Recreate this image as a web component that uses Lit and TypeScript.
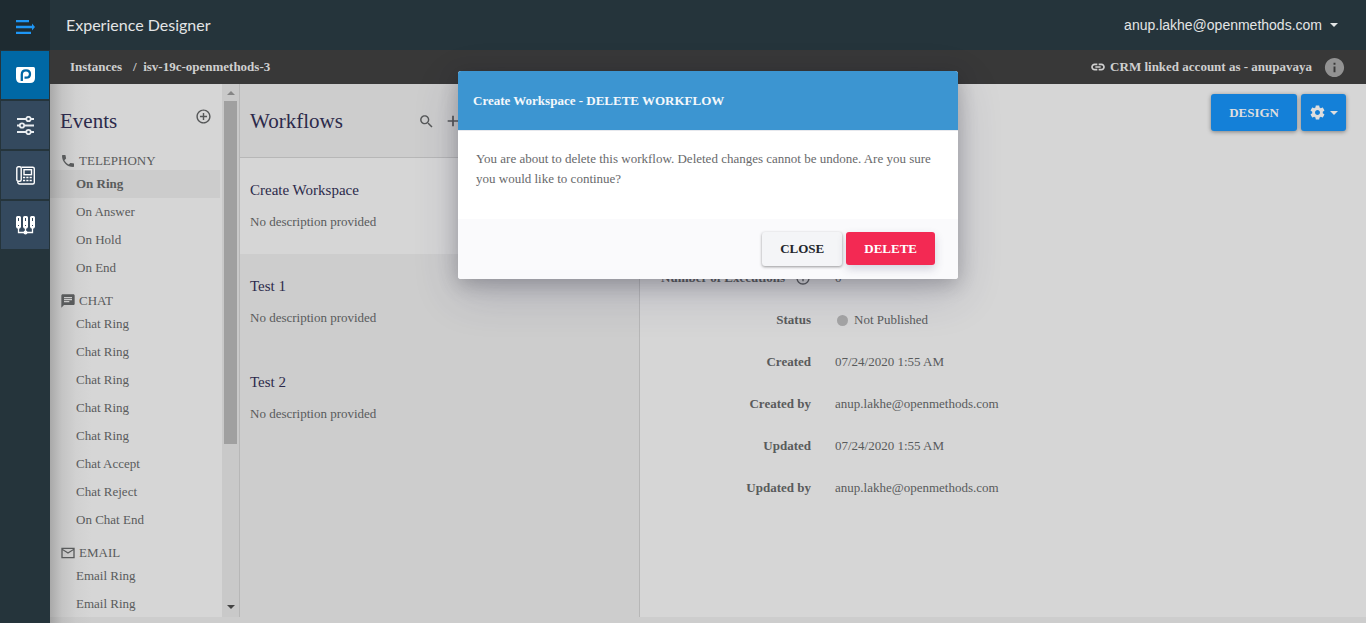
import { LitElement, html, css, svg } from "lit";
import { customElement } from "lit/decorators.js";

const ICONS = {
  phone: "M6.62 10.79c1.44 2.83 3.76 5.14 6.59 6.59l2.2-2.2c.27-.27.67-.36 1.02-.24 1.12.37 2.33.57 3.57.57.55 0 1 .45 1 1V20c0 .55-.45 1-1 1-9.39 0-17-7.61-17-17 0-.55.45-1 1-1h3.5c.55 0 1 .45 1 1 0 1.25.2 2.45.57 3.57.11.35.03.74-.25 1.02l-2.2 2.2z",
  chat: "M20 2H4c-1.1 0-1.99.9-1.99 2L2 22l4-4h14c1.1 0 2-.9 2-2V4c0-1.1-.9-2-2-2zM6 9h12v2H6V9zm8 5H6v-2h8v2zm4-6H6V6h12v2z",
  email: "M22 4H2v16h20V4zm-2 14H4V8l8 5 8-5v10zm-8-7L4 6h16l-8 5z",
  addCircle: "M13 7h-2v4H7v2h4v4h2v-4h4v-2h-4V7zm-1-5C6.48 2 2 6.48 2 12s4.48 10 10 10 10-4.48 10-10S17.52 2 12 2zm0 18c-4.41 0-8-3.59-8-8s3.59-8 8-8 8 3.59 8 8-3.59 8-8 8z",
  search: "M15.5 14h-.79l-.28-.27C15.41 12.59 16 11.11 16 9.5 16 5.91 13.09 3 9.5 3S3 5.91 3 9.5 5.91 16 9.5 16c1.61 0 3.09-.59 4.23-1.57l.27.28v.79l5 4.99L20.49 19l-4.99-5zm-6 0C7.01 14 5 11.99 5 9.5S7.01 5 9.5 5 14 7.01 14 9.5 11.99 14 9.5 14z",
  add: "M20 13.300h-6.700V20h-2.600v-6.700H4v-2.600h6.700V4h2.600v6.700H20z",
  link: "M4.300 12c0-1.500 1.200-2.700 2.700-2.700h4V6.700H7C4.100 6.700 1.700 9.100 1.700 12s2.400 5.300 5.300 5.300h4v-2.600H7c-1.500 0-2.700-1.200-2.700-2.700zM8 13.200h8v-2.400H8zM17 6.700h-4v2.600h4c1.500 0 2.700 1.200 2.700 2.700s-1.200 2.700-2.700 2.700h-4v2.600h4c2.900 0 5.300-2.400 5.300-5.300S19.900 6.700 17 6.700z",
  info: "M12 2C6.480 2 2 6.480 2 12s4.480 10 10 10 10-4.480 10-10S17.520 2 12 2zm1 15h-2v-6h2v6zm0-8h-2V7h2v2z",
  infoOutline: "M11 7h2v2h-2zm0 4h2v6h-2zm1-9C6.480 2 2 6.480 2 12s4.480 10 10 10 10-4.480 10-10S17.520 2 12 2zm0 18c-4.410 0-8-3.590-8-8s3.590-8 8-8 8 3.590 8 8-3.590 8-8 8z",
  gear: "M19.430 12.980c.04-.32.07-.64.07-.98s-.03-.66-.07-.98l2.110-1.650c.19-.15.24-.42.12-.64l-2-3.460c-.12-.22-.39-.3-.61-.22l-2.490 1c-.52-.4-1.080-.73-1.690-.98l-.38-2.650C14.460 2.180 14.250 2 14 2h-4c-.25 0-.46.18-.49.42l-.38 2.650c-.61.25-1.170.59-1.690.98l-2.490-1c-.23-.09-.49 0-.61.22l-2 3.460c-.13.22-.07.49.12.64l2.110 1.650c-.04.32-.07.65-.07.98s.03.66.07.98l-2.110 1.650c-.19.15-.24.42-.12.64l2 3.460c.12.22.39.3.61.22l2.490-1c.52.4 1.080.73 1.690.98l.38 2.650c.03.24.24.42.49.42h4c.25 0 .46-.18.49-.42l.38-2.650c.61-.25 1.170-.59 1.690-.98l2.490 1c.23.09.49 0 .61-.22l2-3.460c.12-.22.07-.49-.12-.64l-2.110-1.650zM12 15.500c-1.930 0-3.500-1.570-3.500-3.500s1.570-3.500 3.500-3.500 3.500 1.570 3.500 3.500-1.570 3.500-3.500 3.500z",
};

const glyph = (d: string, size: number) => html`
  <svg class="glyph" width=${size} height=${size} viewBox="0 0 24 24" aria-hidden="true"><path d=${d} /></svg>
`;

const caret = html`<svg class="glyph" width="8" height="4" viewBox="0 0 8 4" aria-hidden="true"><path d="M0 0h8L4 4z" /></svg>`;

const RAIL = [
  {
    label: "PopFlow",
    active: true,
    art: svg`<path d="M1.500 1h16Q19 1 19 2.500V12q0 5-5 5H5q-5 0-5-5V2.500Q0 1 1.500 1z" fill="#fff"/>
      <path d="M5.800 15V8.200M5.800 8.500C5.800 5.800 7.500 4.300 10 4.300s4 1.600 4 3.700-1.600 3.700-4 3.700H8.500" fill="none" stroke="#0068a5" stroke-width="2.300"/>`,
  },
  {
    label: "Settings",
    active: false,
    art: svg`<g fill="none" stroke="#e9edf1" stroke-width="1.800">
      <path d="M1 3h9M15 3h3M1 9.500h3M9 9.500h9M1 16h9M15 16h3"/>
      <circle cx="12.500" cy="3" r="2.200"/><circle cx="6" cy="9.500" r="2.200"/><circle cx="12.500" cy="16" r="2.200"/></g>`,
  },
  {
    label: "Phone devices",
    active: false,
    art: svg`<g fill="none" stroke="#fff" stroke-width="1.400">
      <path d="M5.500 1.200h11.300a1.500 1.500 0 0 1 1.500 1.500v13.800a1.500 1.500 0 0 1-1.500 1.500H3.800a2 2 0 0 1-2-2.500"/>
      <rect x=".8" y=".8" width="4.400" height="14.500" rx="1.500"/><rect x="8" y="3.700" width="7.500" height="5"/></g>
      <path d="M7 10.700h2.200v1.600H7zm3.300 0h2.200v1.600h-2.200zm3.300 0h2.200v1.600h-2.200zM7 13.700h2.200v1.600H7zm3.300 0h2.200v1.600h-2.200zm3.300 0h2.200v1.600h-2.200z" fill="#fff"/>`,
  },
  {
    label: "Connectors",
    active: false,
    art: svg`<g fill="#fff"><path d="M0 1.500Q0 0 1.500 0h2Q5 0 5 1.500V11l-1 1.500H1L0 11zM7 1.500Q7 0 8.500 0h2Q12 0 12 1.500V11l-1 1.500H8L7 11zM14 1.500Q14 0 15.500 0h2Q19 0 19 1.500V11l-1 1.500h-3L14 11z"/><circle cx="9.500" cy="16.500" r="2"/></g>
      <path d="M2.500 12v4.500h14V12M9.500 12v5" fill="none" stroke="#fff" stroke-width="1.300"/>
      <path d="M2.500 2v3M9.500 2v3M16.500 2v3M2 9.500h1M9 9.500h1M16 9.500h1" stroke="#34495e" stroke-width="1"/>`,
  },
];

const EVENTS = [
  { name: "TELEPHONY", icon: ICONS.phone, items: ["On Ring", "On Answer", "On Hold", "On End"] },
  {
    name: "CHAT",
    icon: ICONS.chat,
    items: ["Chat Ring", "Chat Ring", "Chat Ring", "Chat Ring", "Chat Ring", "Chat Accept", "Chat Reject", "On Chat End"],
  },
  { name: "EMAIL", icon: ICONS.email, items: ["Email Ring", "Email Ring"] },
];

const WORKFLOWS = ["Create Workspace", "Test 1", "Test 2"];

const DETAILS = [
  { label: "Number of Executions", value: "0", info: true },
  { label: "Status", value: "Not Published", dot: true },
  { label: "Created", value: "07/24/2020 1:55 AM" },
  { label: "Created by", value: "anup.lakhe@openmethods.com" },
  { label: "Updated", value: "07/24/2020 1:55 AM" },
  { label: "Updated by", value: "anup.lakhe@openmethods.com" },
];

@customElement("app-root")
export class AppRoot extends LitElement {
  static styles = css`
    :host {
      display: block;
      height: 100vh;
      overflow: hidden;
      font: 13px/20px "Liberation Serif", serif;
      color: #595b5c;
      background: #cdcdcd;
    }
    *, *::before { box-sizing: border-box; }
    h1, h2, h3, p, ul, dl, dd { margin: 0; padding: 0; font-weight: 400; }
    ul { list-style: none; }
    a { color: inherit; text-decoration: none; }
    button { font: inherit; color: inherit; border: 0; padding: 0; background: none; cursor: pointer; }
    .glyph { display: block; fill: currentColor; flex: none; }

    .shell { display: grid; grid-template-columns: 50px minmax(0, 1fr); grid-template-rows: minmax(0, 1fr); height: 100%; }
    .rail { background: #25343b; }
    .toggle { display: flex; align-items: center; justify-content: center; width: 100%; height: 50px; padding-top: 4px; background: #1e2b31; }
    .railList { display: grid; gap: 2px; padding: 1px 1px 0 1px; }
    .railLink { display: flex; align-items: center; justify-content: center; height: 48px; background: #34495e; }
    .railLink.active { background: #0068a5; }

    .page { display: grid; grid-template-rows: 50px 34px minmax(0, 1fr); position: relative; min-height: 0; }
    .top { display: flex; align-items: center; justify-content: space-between; padding: 0 28px 0 16px; background: #25343b; color: #e3e5e6; }
    .title { font: 16px/24px Lato, sans-serif; }
    .account { display: flex; align-items: center; gap: 8px; font: 14px/20px "Liberation Sans", sans-serif; }
    .crumbs { display: flex; align-items: center; justify-content: space-between; padding: 0 20px; background: #383838; color: #cfcfcf; font-weight: 700; }
    .trail, .crm { display: flex; align-items: center; }
    .trail { gap: 11px; }
    .crm { gap: 4px; }
    .crmInfo { margin-left: 7px; color: #929292; }

    .columns { display: grid; grid-template-columns: 190px 400px minmax(0, 1fr); grid-template-rows: minmax(0, 1fr); padding-bottom: 6px; min-height: 0; background: linear-gradient(90deg, #a3a3a3, #bebebe 12px, #c9c9c9 26px, #cdcdcd 42px); }
    .events { display: grid; grid-template-columns: minmax(0, 1fr) 17px; grid-template-rows: minmax(0, 1fr); min-height: 0; background: linear-gradient(90deg, #a9a9a9, #c4c4c4 12px, #d1d1d1 26px, #d6d6d6 42px); border-right: 1px solid #b7b7b7; }
    .eventBody { min-height: 0; overflow: hidden; padding-top: 22px; }
    .head { display: flex; justify-content: space-between; color: #2c2a4b; }
    .heading { font-size: 21px; line-height: 30px; }
    .eventHead { padding: 0 10px; margin-bottom: 16px; }
    .icon { display: block; height: 20px; color: #555758; }
    .group { margin-bottom: 10px; }
    .groupName { display: flex; align-items: center; gap: 3px; height: 18px; padding-left: 10px; font-size: 13px; line-height: 18px; }
    .event { display: block; height: 28px; padding-left: 26px; margin-right: 2px; line-height: 28px; }
    .event.on { font-weight: 700; background: rgba(0, 0, 0, .045); }
    .scroll { display: flex; flex-direction: column; align-items: center; justify-content: space-between; padding: 7px 2px 8px; background: #c9c9c9; color: #444; }
    .thumb { width: 13px; height: 343px; background: #a0a0a0; margin: 6px 0 auto; }
    .up { color: #858585; }

    .flows { border-right: 1px solid #b7b7b7; background: #cdcdcd; }
    .flowHead { height: 74px; padding: 22px 10px 0; border-bottom: 1px solid #b7b7b7; }
    .tools { display: flex; gap: 10px; padding: 5px 168px 0 0; }
    .flow { display: block; height: 96px; padding: 22px 10px; }
    .flow.on { background: #d6d6d6; }
    .flowName { font-size: 15px; line-height: 20px; color: #2c2a4b; margin-bottom: 12px; }

    .detail { background: #d6d6d6; padding: 10px 20px 0 0; }
    .actions { display: flex; justify-content: flex-end; gap: 4px; color: #dedede; margin-bottom: 42px; }
    .action { display: flex; align-items: center; justify-content: center; gap: 4px; height: 37px; padding: 0 18px; border-radius: 3px; background: #1480d8; box-shadow: 0 1px 4px rgba(0, 0, 0, .4); font-weight: 700; }
    .menu { padding: 0 8px; }
    .facts { display: grid; grid-template-columns: 171px minmax(0, 1fr); column-gap: 24px; padding-top: 84px; }
    .label, .value { display: flex; align-items: center; height: 42px; }
    .label { justify-content: flex-end; gap: 10px; font-weight: 700; white-space: nowrap; }
    .dot { width: 11px; height: 11px; margin: 0 6px 0 2px; border-radius: 50%; background: #a5a5a5; }

    .overlay { position: absolute; inset: 0; display: flex; align-items: flex-start; justify-content: center; padding-top: 71px; }
    .modal { position: static; display: block; width: 500px; margin: 0; padding: 0; border: 0; border-radius: 3px; overflow: hidden; background: #fff; color: #68696b; box-shadow: 0 15px 45px rgba(50, 50, 93, .2), 0 5px 20px rgba(0, 0, 0, .22); }
    .modalHead { padding: 20px 15px 19px; line-height: 20px; font-size: 13px; font-weight: 700; color: #f4f8fb; background: #3c95d1; border-bottom: 1px solid #e6e8ed; box-sizing: content-box; }
    .modalText { padding: 18px 18px 30px; }
    .modalFoot { display: flex; justify-content: flex-end; align-items: flex-start; gap: 4px; padding: 13px 23px; background: #fafafc; }
    .close, .delete { padding: 0 18px; border-radius: 3px; font-weight: 700; }
    .close { height: 34px; color: #23262b; background: #f4f5f7; box-shadow: 0 1px 3px rgba(0, 0, 0, .4); }
    .delete { height: 33px; color: #fff; background: #f32953; box-shadow: 0 4px 10px rgba(50, 50, 93, .2); }
  `;

  render() {
    return html`
      <div class="shell">
        <nav class="rail">
          <button class="toggle" aria-label="Expand menu">
            <svg width="19" height="14" viewBox="0 0 19 14" aria-hidden="true">
              <path d="M0 0h13v2.300H0zM0 5.800h16V3.500l3 3.500-3 3.500V8.200H0zM0 11.700h15V14H0z" fill="#1e96f5" />
            </svg>
          </button>
          <div class="railList">
            ${RAIL.map((r) => html`
              <a class="railLink ${r.active ? "active" : ""}" href="#" aria-label=${r.label}>
                <svg width="19" height="19" viewBox="0 0 19 19" aria-hidden="true">${r.art}</svg>
              </a>`)}
          </div>
        </nav>
        <div class="page">
          <header class="top">
            <h1 class="title">Experience Designer</h1>
            <button class="account">anup.lakhe@openmethods.com ${caret}</button>
          </header>
          <div class="crumbs">
            <div class="trail"><a href="#">Instances</a><span>/&nbsp; isv-19c-openmethods-3</span></div>
            <div class="crm">
              ${glyph(ICONS.link, 16)}<span>CRM linked account as - anupavaya</span>
              <span class="crmInfo">${glyph(ICONS.info, 23)}</span>
            </div>
          </div>
          <main class="columns">
            <section class="events">
              <div class="eventBody">
                <div class="head eventHead">
                  <h2 class="heading">Events</h2>
                  <button class="icon" aria-label="Add event">${glyph(ICONS.addCircle, 17)}</button>
                </div>
                ${EVENTS.map((g, gi) => html`
                  <div class="group">
                    <h3 class="groupName">${glyph(g.icon, 16)}${g.name}</h3>
                    <ul>
                      ${g.items.map((e, i) => html`<li><a class="event ${gi + i === 0 ? "on" : ""}" href="#">${e}</a></li>`)}
                    </ul>
                  </div>`)}
              </div>
              <div class="scroll" aria-hidden="true">
                <svg class="glyph up" width="8" height="4" viewBox="0 0 8 4"><path d="M0 4h8L4 0z" /></svg>
                <span class="thumb"></span>
                ${caret}
              </div>
            </section>
            <section class="flows">
              <div class="head flowHead">
                <h2 class="heading">Workflows</h2>
                <div class="tools">
                  <button class="icon" aria-label="Search">${glyph(ICONS.search, 17)}</button>
                  <button class="icon" aria-label="Add workflow">${glyph(ICONS.add, 16)}</button>
                </div>
              </div>
              ${WORKFLOWS.map((w, i) => html`
                <a class="flow ${i === 0 ? "on" : ""}" href="#">
                  <h3 class="flowName">${w}</h3>
                  <p>No description provided</p>
                </a>`)}
            </section>
            <section class="detail">
              <div class="actions">
                <button class="action">DESIGN</button>
                <button class="action menu" aria-label="Workflow options">${glyph(ICONS.gear, 17)}${caret}</button>
              </div>
              <dl class="facts">
                ${DETAILS.map((d) => html`
                  <dt class="label">${d.label}${d.info ? glyph(ICONS.infoOutline, 16) : ""}</dt>
                  <dd class="value">${d.dot ? html`<span class="dot"></span>` : ""}${d.value}</dd>`)}
              </dl>
            </section>
          </main>
          <div class="overlay">
            <dialog class="modal" open aria-labelledby="modal-title">
              <h2 class="modalHead" id="modal-title">Create Workspace - DELETE WORKFLOW</h2>
              <p class="modalText">
                You are about to delete this workflow. Deleted changes cannot be undone. Are you sure you would like to continue?
              </p>
              <div class="modalFoot">
                <button class="close">CLOSE</button>
                <button class="delete">DELETE</button>
              </div>
            </dialog>
          </div>
        </div>
      </div>
    `;
  }
}
